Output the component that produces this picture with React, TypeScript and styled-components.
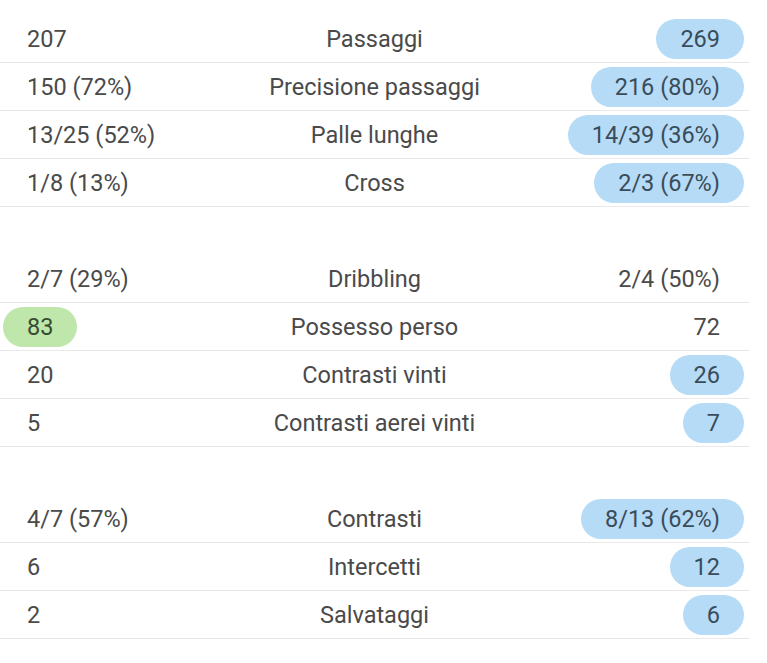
import React from "react";
import styled, { createGlobalStyle } from "styled-components";

const Global = createGlobalStyle`
  html, body { margin: 0; padding: 0; background: #ffffff; }
  body { font-family: Roboto, "Noto Sans", Arial, sans-serif; }
`;

const Page = styled.div`
  width: 749px;
  padding-top: 15px;
  display: flex;
  flex-direction: column;
  gap: 48px;
`;

const Group = styled.div`
  display: flex;
  flex-direction: column;
`;

const Row = styled.div`
  display: grid;
  grid-template-columns: 1fr auto 1fr;
  align-items: center;
  height: 47px;
  border-bottom: 1px solid #e8e8e8;
  font-size: 23.5px;
  color: #4a4a4a;
`;

const Side = styled.div<{ $right?: boolean }>`
  display: flex;
  justify-content: ${(p) => (p.$right ? "flex-end" : "flex-start")};
  padding: ${(p) => (p.$right ? "0 5px 0 0" : "0 0 0 3px")};
`;

const Label = styled.div`
  text-align: center;
  color: #4a4a4a;
`;

type Tone = "none" | "blue" | "green";

const Value = styled.span<{ $tone: Tone }>`
  display: inline-flex;
  align-items: center;
  height: 40px;
  padding: 0 24px;
  border-radius: 20px;
  background: ${(p) =>
    p.$tone === "blue" ? "#b5dbf7" : p.$tone === "green" ? "#bfe6ab" : "transparent"};
  color: ${(p) =>
    p.$tone === "blue" ? "#3a4c59" : p.$tone === "green" ? "#374b32" : "#4a4a4a"};
`;

type Stat = { l: string; label: string; r: string; lt?: Tone; rt?: Tone };

const groups: Stat[][] = [
  [
    { l: "207", label: "Passaggi", r: "269", rt: "blue" },
    { l: "150 (72%)", label: "Precisione passaggi", r: "216 (80%)", rt: "blue" },
    { l: "13/25 (52%)", label: "Palle lunghe", r: "14/39 (36%)", rt: "blue" },
    { l: "1/8 (13%)", label: "Cross", r: "2/3 (67%)", rt: "blue" },
  ],
  [
    { l: "2/7 (29%)", label: "Dribbling", r: "2/4 (50%)" },
    { l: "83", label: "Possesso perso", r: "72", lt: "green" },
    { l: "20", label: "Contrasti vinti", r: "26", rt: "blue" },
    { l: "5", label: "Contrasti aerei vinti", r: "7", rt: "blue" },
  ],
  [
    { l: "4/7 (57%)", label: "Contrasti", r: "8/13 (62%)", rt: "blue" },
    { l: "6", label: "Intercetti", r: "12", rt: "blue" },
    { l: "2", label: "Salvataggi", r: "6", rt: "blue" },
  ],
];

export default function App() {
  return (
    <>
      <Global />
      <Page>
        {groups.map((g, gi) => (
          <Group key={gi}>
            {g.map((s) => (
              <Row key={s.label}>
                <Side>
                  <Value $tone={s.lt ?? "none"}>{s.l}</Value>
                </Side>
                <Label>{s.label}</Label>
                <Side $right>
                  <Value $tone={s.rt ?? "none"}>{s.r}</Value>
                </Side>
              </Row>
            ))}
          </Group>
        ))}
      </Page>
    </>
  );
}
